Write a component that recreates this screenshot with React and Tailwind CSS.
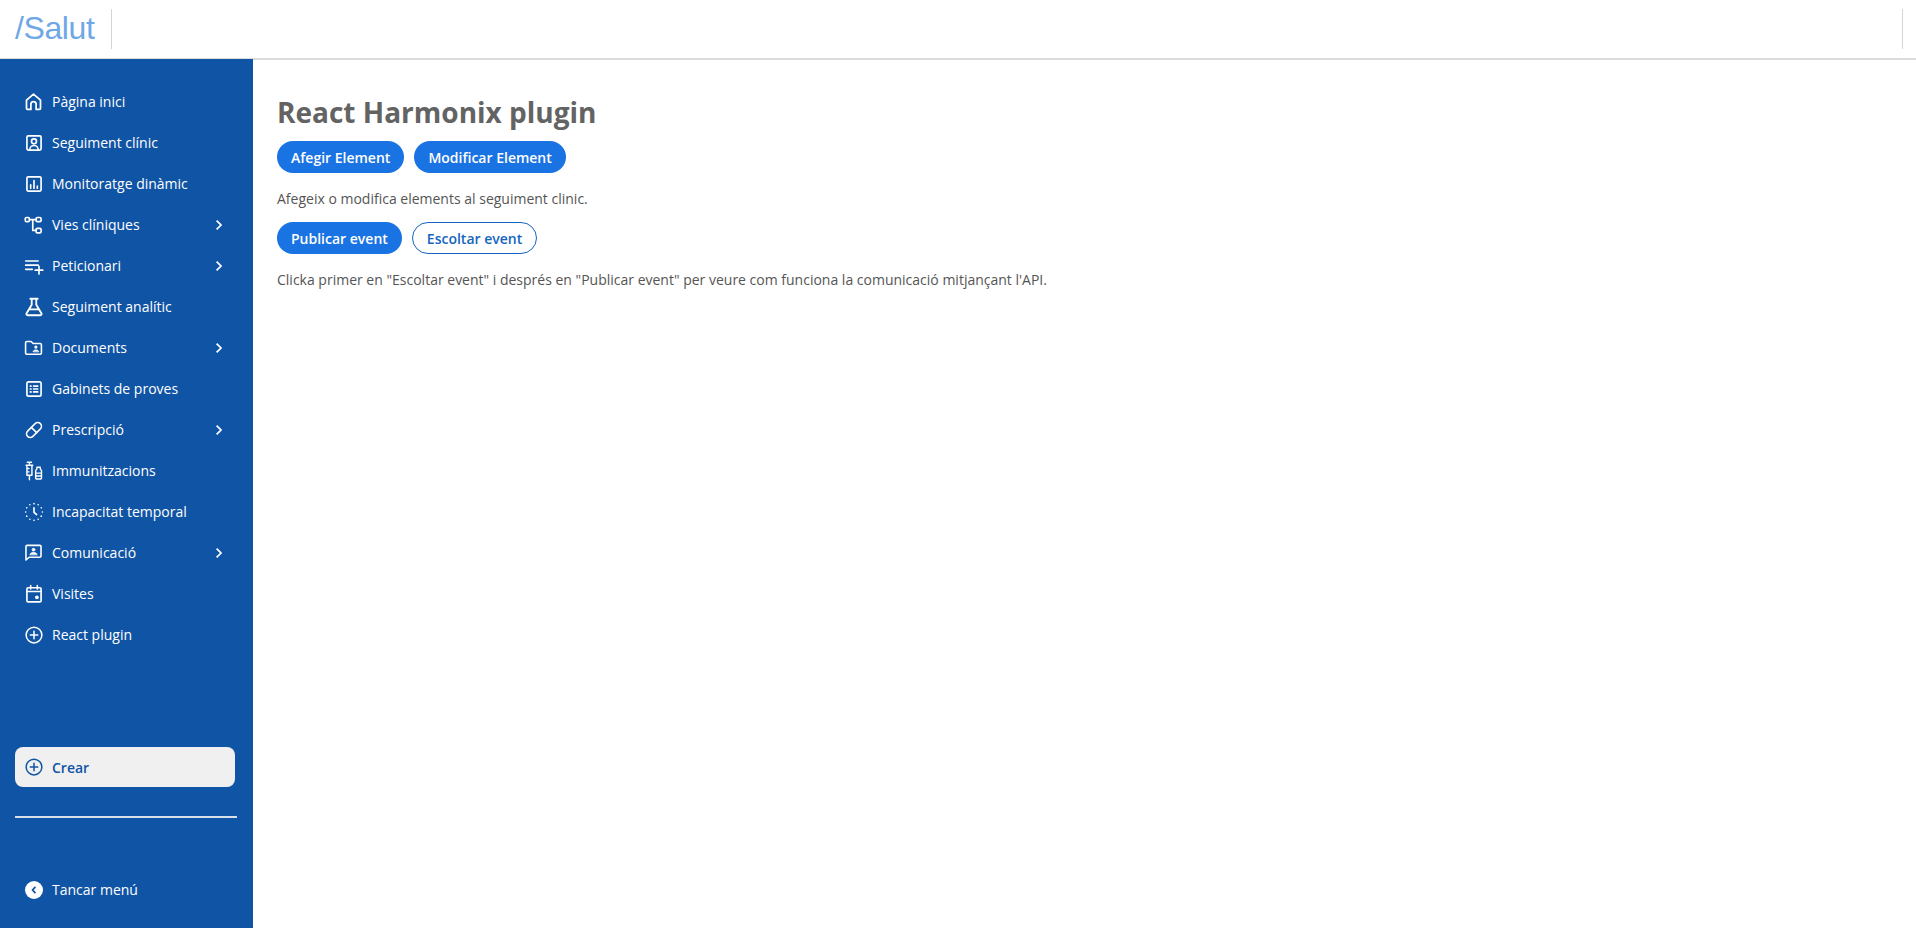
import React from "react";

const Svg = ({ children, className = "w-5 h-5" }) => (
  <svg
    viewBox="0 0 24 24"
    fill="none"
    stroke="currentColor"
    strokeWidth="2"
    strokeLinecap="round"
    strokeLinejoin="round"
    className={className}
  >
    {children}
  </svg>
);

const HomeIcon = () => (
  <Svg className="w-[21px] h-[21px]">
    <path d="M4 10.500 12 3.500l8 7V20a1 1 0 0 1-1 1h-4v-6a3 3 0 0 0-6 0v6H5a1 1 0 0 1-1-1z" />
  </Svg>
);
const PatientIcon = () => (
  <Svg>
    <rect x="3.500" y="3.500" width="17" height="17" rx="1.500" />
    <circle cx="12" cy="10" r="3" />
    <path d="M7 20c0-3 2.500-5 5-5s5 2 5 5" />
  </Svg>
);
const ChartIcon = () => (
  <Svg>
    <rect x="3.500" y="3.500" width="17" height="17" rx="1.500" />
    <path d="M8 17v-4M12 17V8M16 17v-2.500" />
  </Svg>
);
const FlowIcon = () => (
  <Svg>
    <rect x="1.500" y="3" width="5" height="5" rx="1.500" />
    <rect x="14.500" y="3" width="6" height="5" rx="1.500" />
    <rect x="14.500" y="16" width="6" height="5.500" rx="1.500" />
    <path d="M6.500 5.500h8M10.500 5.500V18.500h4" />
  </Svg>
);
const ListPlusIcon = () => (
  <Svg>
    <path d="M2 6h15M2 11h15M2 16h8M18 12.500v9M13.500 17h9" />
  </Svg>
);
const FlaskIcon = () => (
  <Svg className="w-[22px] h-[22px]">
    <path d="M8 3h8M9.500 3v6.500L3.800 19a1.400 1.400 0 0 0 1.200 2h14a1.400 1.400 0 0 0 1.200-2L14.500 9.500V3M7 14.500h10" />
  </Svg>
);
const FolderIcon = () => (
  <Svg className="w-[19px] h-[19px]">
    <path d="M2 6a1.500 1.500 0 0 1 1.500-1.500H9L11.500 7h9A1.500 1.500 0 0 1 22 8.500V19a1.500 1.500 0 0 1-1.500 1.500h-17A1.500 1.500 0 0 1 2 19z" />
    <circle cx="15" cy="11.500" r="1" fill="currentColor" />
    <path d="M11.500 17c.5-1.500 2-2 3.500-2s3 .5 3.500 2z" fill="currentColor" strokeWidth="1" />
  </Svg>
);
const ListBoxIcon = () => (
  <Svg>
    <rect x="3.500" y="3.500" width="17" height="17" rx="2" />
    <path d="M7.500 8.500h1M7.500 12h1M7.500 15.500h1M11.500 8.500h5M11.500 12h5M11.500 15.500h5" />
  </Svg>
);
const PillIcon = () => (
  <Svg className="w-[18px] h-[18px]">
    <path d="m10.500 20.500 10-10a4.950 4.950 0 1 0-7-7l-10 10a4.950 4.950 0 1 0 7 7Z" />
    <path d="m8.500 8.500 7 7" />
  </Svg>
);
const VaccineIcon = () => (
  <Svg>
    <path d="M4 1.500h5M6.500 1.500V5M2.500 5h8M3.500 5v12h6V5M3.500 9H6M3.500 13H6M6.500 17v5.500" strokeWidth="1.700" />
    <path d="M16 7.500h3M15.500 7.500v2l-1.500 2v9a1 1 0 0 0 1 1h5a1 1 0 0 0 1-1v-9l-1.500-2v-2M14 14.500h7M14 18h7" strokeWidth="1.700" />
  </Svg>
);
const TimerIcon = () => (
  <Svg>
    <path d="M12 7v5.500l3 2.500" />
    <path
      d="M12 2h.01M17 3.300h.01M20.700 7h.01M22 12h.01M20.700 17h.01M17 20.700h.01M12 22h.01M7 20.700h.01M3.300 17h.01M2 12h.01M3.300 7h.01M7 3.300h.01"
      strokeWidth="2"
    />
  </Svg>
);
const ChatIcon = () => (
  <Svg className="w-[19px] h-[19px]">
    <path d="M2.500 4.500A1.500 1.500 0 0 1 4 3h16a1.500 1.500 0 0 1 1.500 1.500v12A1.500 1.500 0 0 1 20 18H6.500l-4 3.500z" />
    <circle cx="12" cy="8.500" r="1.800" fill="currentColor" strokeWidth="1" />
    <path d="M7.500 14.500c.5-2 2.500-2.500 4.500-2.500s4 .5 4.500 2.500z" fill="currentColor" strokeWidth="1" />
  </Svg>
);
const CalendarIcon = () => (
  <Svg>
    <rect x="3.500" y="4.500" width="17" height="17" rx="1.500" />
    <path d="M8 2v4M16 2v4M3.500 9h17" />
    <circle cx="15.500" cy="16" r="1.300" fill="currentColor" />
  </Svg>
);
const PlusCircleIcon = () => (
  <Svg className="w-[18px] h-[18px]">
    <circle cx="12" cy="12" r="10.500" />
    <path d="M12 7v10M7 12h10" />
  </Svg>
);
const Chevron = () => (
  <svg viewBox="0 0 10 14" className="w-[8px] h-[12px]" fill="none" stroke="currentColor" strokeWidth="2.200">
    <path d="m2 1.500 5.500 5.500L2 12.500" />
  </svg>
);

const menu = [
  { label: "Pàgina inici", icon: <HomeIcon /> },
  { label: "Seguiment clínic", icon: <PatientIcon /> },
  { label: "Monitoratge dinàmic", icon: <ChartIcon /> },
  { label: "Vies clíniques", icon: <FlowIcon />, more: true },
  { label: "Peticionari", icon: <ListPlusIcon />, more: true },
  { label: "Seguiment analític", icon: <FlaskIcon /> },
  { label: "Documents", icon: <FolderIcon />, more: true },
  { label: "Gabinets de proves", icon: <ListBoxIcon /> },
  { label: "Prescripció", icon: <PillIcon />, more: true },
  { label: "Immunitzacions", icon: <VaccineIcon /> },
  { label: "Incapacitat temporal", icon: <TimerIcon /> },
  { label: "Comunicació", icon: <ChatIcon />, more: true },
  { label: "Visites", icon: <CalendarIcon /> },
  { label: "React plugin", icon: <PlusCircleIcon /> },
];

const MenuItem = ({ label, icon, more }) => (
  <a className="flex h-[41px] items-center pl-[22px] pr-[30px] text-white">
    <span className="flex w-[23px] justify-center">{icon}</span>
    <span className="ml-[7px] flex-1 text-[14px] font-medium">{label}</span>
    {more && <Chevron />}
  </a>
);

const Pill = ({ children, outline }) => (
  <button
    className={
      outline
        ? "h-[32px] rounded-full border border-[#1565c0] bg-white px-[14px] text-[14px] font-semibold text-[#1565c0]"
        : "h-[32px] rounded-full bg-[#1a73e3] px-[14px] text-[14px] font-semibold text-white"
    }
  >
    {children}
  </button>
);

const App = () => {
  return (
    <div className="flex h-[928px] flex-col overflow-hidden bg-white font-['Open_Sans',sans-serif]">
      <header className="z-10 flex h-[60px] shrink-0 items-start justify-between border-b-2 border-[#dcdcdc] bg-white pr-[13px]">
        <div className="flex h-[58px] items-center">
          <span className="-mt-[2px] pl-[15px] font-['Liberation_Sans',sans-serif] text-[32px] tracking-[-0.4px] text-[#6fa8e6]">
            /Salut
          </span>
          <div className="ml-[17px] h-[40px] w-px bg-[#d4d4d4]" />
        </div>
        <div className="mt-[9px] h-[40px] w-px bg-[#d4d4d4]" />
      </header>

      <div className="-mt-px flex flex-1">
        <aside className="z-20 flex w-[253px] shrink-0 flex-col bg-[#0f54a5]">
          <nav className="pt-[22px]">
            {menu.map((item) => (
              <MenuItem key={item.label} {...item} />
            ))}
          </nav>
          <div className="mt-auto px-[15px] pb-[18px]">
            <button className="flex h-[40px] w-[220px] items-center rounded-[8px] bg-[#f0f0f0] pl-[10px] text-[14px] font-semibold text-[#0f54a5]">
              <PlusCircleIcon />
              <span className="ml-[9px]">Crear</span>
            </button>
            <div className="mt-[29px] h-[2px] w-[222px] bg-[#d9dfe8]" />
            <div className="mt-[51px] flex h-[41px] items-center pl-[10px] text-[14px] font-medium text-white">
              <span className="flex h-[18px] w-[18px] items-center justify-center rounded-full bg-white text-[#0f54a5]">
                <svg viewBox="0 0 10 14" className="h-[8px] w-[6px]" fill="none" stroke="currentColor" strokeWidth="3">
                  <path d="M7.500 1.500 2.500 7l5 5.500" />
                </svg>
              </span>
              <span className="ml-[9px]">Tancar menú</span>
            </div>
          </div>
        </aside>

        <main className="flex-1 pl-[24px] pt-[34px] text-[14px] text-[#555555]">
          <h1 className="text-[28px] leading-[38px] font-bold text-[#636363]">React Harmonix plugin</h1>
          <div className="mt-[10px] flex gap-[10px]">
            <Pill>Afegir Element</Pill>
            <Pill>Modificar Element</Pill>
          </div>
          <p className="mt-[16px] leading-[19px]">Afegeix o modifica elements al seguiment clinic.</p>
          <div className="mt-[14px] flex gap-[10px]">
            <Pill>Publicar event</Pill>
            <Pill outline>Escoltar event</Pill>
          </div>
          <p className="mt-[16px] leading-[19px]">
            Clicka primer en "Escoltar event" i després en "Publicar event" per veure com funciona la comunicació mitjançant l'API.
          </p>
        </main>
      </div>
    </div>
  );
};

export default App;
